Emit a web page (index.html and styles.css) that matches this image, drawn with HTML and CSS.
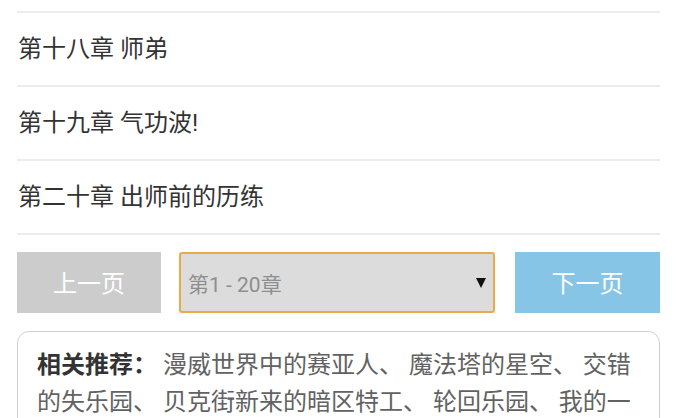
FILE: index.html
```html
<!DOCTYPE html>
<html lang="zh-CN">
<head>
<meta charset="utf-8">
<title>章节目录</title>
<link rel="stylesheet" href="styles.css">
</head>
<body>
<div class="page">
  <ul class="chapters">
    <li class="chapter">第十八章 师弟</li>
    <li class="chapter">第十九章 气功波!</li>
    <li class="chapter">第二十章 出师前的历练</li>
  </ul>
  <div class="pager">
    <a class="btn btn-prev">上一页</a>
    <div class="select">
      <span class="select-text">第1 - 20章</span>
      <span class="select-arrow"></span>
    </div>
    <a class="btn btn-next">下一页</a>
  </div>
  <div class="recommend">
    <span class="rec-label">相关推荐：</span>
    <span class="rec-items">漫威世界中的赛亚人、 魔法塔的星空、 交错的失乐园、 贝克街新来的暗区特工、 轮回乐园、 我的一个世界、 末日乐园</span>
  </div>
</div>
</body>
</html>
```

FILE: styles.css
```css
* { box-sizing: border-box; }
html, body { margin: 0; padding: 0; background: #fff; }
body {
  font-family: Roboto, "Noto Sans CJK SC", sans-serif;
  color: #333;
  overflow: hidden;
}
.page {
  width: 643px;
  margin-left: 17px;
}
.chapters {
  list-style: none;
  margin: 11px 0 0;
  padding: 0;
  border-top: 2px solid #ececec;
}
.chapter {
  height: 74px;
  border-bottom: 2px solid #ececec;
  display: flex;
  align-items: center;
  padding: 0 0 5px 1px;
  font-size: 24px;
  color: #333;
}
.pager {
  display: flex;
  margin-top: 17px;
  height: 61px;
}
.btn {
  display: flex;
  align-items: center;
  justify-content: center;
  font-size: 24px;
  color: #fff;
  text-decoration: none;
  padding-bottom: 2px;
}
.btn-prev { width: 144px; background: #cccccc; }
.btn-next { width: 145px; margin-left: auto; background: #86c5e5; }
.select {
  width: 316px;
  margin-left: 18px;
  background: #dcdcdc;
  border: 2px solid #e8aa4a;
  border-radius: 3px;
  display: flex;
  align-items: center;
  padding: 0 7px 0 7px;
}
.select-text {
  font-size: 21px;
  color: #8e8e8e;
  flex: 1;
}
.select-arrow {
  width: 0;
  height: 0;
  border-left: 5.5px solid transparent;
  border-right: 5.5px solid transparent;
  border-top: 10px solid #111;
}
.recommend {
  margin-top: 18px;
  border: 1px solid #cfcfcf;
  border-radius: 12px;
  padding: 15px 19px 0 19px;
  font-size: 24px;
  line-height: 37px;
  color: #626262;
  height: 120px;
}
.rec-label {
  font-weight: bold;
  color: #333;
}
```
